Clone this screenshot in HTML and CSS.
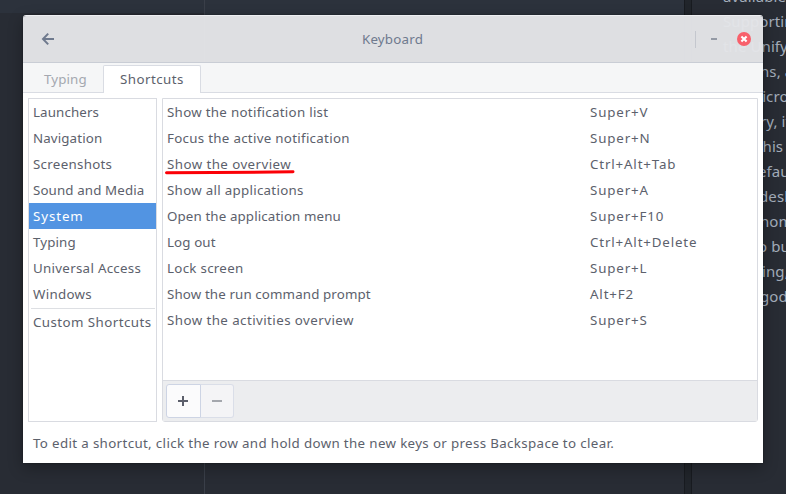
FILE: index.html
```
<!DOCTYPE html>
<html lang="en">
<head>
<meta charset="utf-8">
<title>Keyboard</title>
<link rel="stylesheet" href="styles.css">
</head>
<body>
<div class="desktop">
  <div class="pane pane-tree"></div>
  <div class="pane pane-editor"></div>
  <div class="gutter"></div>
  <div class="pane article">
    <p>available</p>
    <p>Supporting</p>
    <p>the Unify</p>
    <p class="in-ns">ns, a</p>
    <p class="in-micro">micro</p>
    <p class="in-ry">ry, it</p>
    <p class="in-this">this</p>
    <p class="in-efault">efault</p>
    <p class="in-desk">desk</p>
    <p class="in-nom">nom</p>
    <p class="in-bu">o bu</p>
    <p class="in-ing">ing,</p>
    <p class="in-god">god</p>
  </div>
</div>

<main class="window">
  <header class="titlebar">
    <svg class="back" width="14" height="14" viewBox="0 0 14 14"><path d="M7.2 1.6 2 7l5.2 5.4M2 7h11" fill="none" stroke="currentColor" stroke-width="2"/></svg>
    <h1>Keyboard</h1>
    <div class="controls">
      <span class="divider"></span>
      <span class="minimize"></span>
      <svg class="close" width="14" height="14" viewBox="0 0 14 14"><circle cx="7" cy="7" r="7" fill="#f8606b"/><path d="m4.4 4.4 5.2 5.2m0-5.2L4.4 9.6" stroke="#fff" stroke-width="2.1"/></svg>
    </div>
  </header>
  <nav class="tabs">
    <span class="tab">Typing</span>
    <span class="tab active">Shortcuts</span>
  </nav>
  <div class="content">
    <ul class="categories">
      <li>Launchers</li>
      <li>Navigation</li>
      <li class="spaced">Screenshots</li>
      <li>Sound and Media</li>
      <li class="selected wide">System</li>
      <li>Typing</li>
      <li class="spaced">Universal Access</li>
      <li class="spaced">Windows</li>
      <li class="separator"></li>
      <li class="loose">Custom Shortcuts</li>
    </ul>
    <section class="shortcuts">
      <div class="rows">
        <div class="row"><span class="spaced">Show the notification list</span><span>Super+V</span></div>
        <div class="row"><span class="spaced">Focus the active notification</span><span>Super+N</span></div>
        <div class="row"><span class="marked loose">Show the overview<svg class="underline" width="132" height="8" viewBox="0 0 132 8"><path d="M2.5 4.8 50 4.5 129 3.8" fill="none" stroke="#fb0007" stroke-width="3" stroke-linecap="round"/></svg></span><span>Ctrl+Alt+Tab</span></div>
        <div class="row"><span class="spaced">Show all applications</span><span>Super+A</span></div>
        <div class="row"><span>Open the application menu</span><span>Super+F10</span></div>
        <div class="row"><span>Log out</span><span>Ctrl+Alt+Delete</span></div>
        <div class="row"><span class="spaced">Lock screen</span><span>Super+L</span></div>
        <div class="row"><span>Show the run command prompt</span><span>Alt+F2</span></div>
        <div class="row"><span class="loose">Show the activities overview</span><span>Super+S</span></div>
      </div>
      <div class="toolbar">
        <span class="button add"><svg width="10" height="10" viewBox="0 0 10 10"><path d="M0 5h10M5 0v10" stroke="currentColor" stroke-width="2"/></svg></span>
        <span class="button remove"><svg width="10" height="10" viewBox="0 0 10 10"><path d="M0 5h10" stroke="currentColor" stroke-width="2"/></svg></span>
      </div>
    </section>
  </div>
  <footer class="hint">To edit a shortcut, click the row and hold down the new keys or press Backspace to clear.</footer>
</main>
</body>
</html>
```
FILE: styles.css
```
* { box-sizing: border-box; }

body {
  margin: 0;
  width: 786px;
  height: 494px;
  overflow: hidden;
  position: relative;
  background: #282c34;
  color: #5c616c;
  font: 13.33px/26px "Noto Sans", "Open Sans", sans-serif;
  letter-spacing: 0.12px;
}

.desktop {
  display: flex;
  height: 494px;
}

.pane { flex: none; }

.pane-tree {
  width: 205px;
  border-right: 1px solid #3a3f49;
  background: linear-gradient(#2c323c 13px, #282c34 13px);
}

.pane-editor {
  width: 479px;
  background: linear-gradient(#2c323c 15px, #282c34 15px);
}

.gutter {
  flex: none;
  width: 8px;
  border: solid #181b20;
  border-width: 0 1px;
  background: #21252b;
}

.article {
  width: 94px;
  padding-left: 31px;
  overflow: hidden;
  color: #a3acba;
  font-size: 15px;
  line-height: 25px;
  letter-spacing: 0.1px;
  white-space: nowrap;
}

.article p { margin: 0; }
.article p:first-child { margin-top: -16px; }
.article .in-ns { padding-left: 37px; }
.article .in-micro { padding-left: 25px; }
.article .in-ry { padding-left: 37px; }
.article .in-this { padding-left: 34px; }
.article .in-efault { padding-left: 35px; }
.article .in-desk { padding-left: 36px; }
.article .in-nom { padding-left: 37px; }
.article .in-bu { padding-left: 35px; }
.article .in-ing { padding-left: 39px; }
.article .in-god { padding-left: 37px; }

.window {
  position: absolute;
  left: 23px;
  top: 15px;
  width: 740px;
  height: 448px;
  display: flex;
  flex-direction: column;
  border-radius: 3px 3px 0 0;
  box-shadow: 0 0 2px rgba(0, 0, 0, 0.4), 0 5px 15px rgba(0, 0, 0, 0.3);
}

.titlebar {
  flex: none;
  height: 48px;
  display: grid;
  grid-template-columns: 1fr auto 1fr;
  align-items: center;
  padding: 0 12px 0 18px;
  border-top: 1px solid #eeeff2;
  border-bottom: 1px solid #c9cdd5;
  border-radius: 3px 3px 0 0;
  background: rgba(228, 229, 232, 0.97);
  background-clip: padding-box;
  color: #6f7a8e;
}

.titlebar h1 {
  margin: 0 0 0 -7px;
  font-size: inherit;
  font-weight: 400;
  letter-spacing: 0.2px;
}

.back { display: block; }

.controls {
  display: flex;
  align-items: center;
  justify-content: flex-end;
}

.divider { width: 1px; height: 17px; background: #c4c7ce; }
.minimize { width: 6px; height: 2px; margin: 0 20px 0 15px; background: #949aa5; }
.close { display: block; }

.tabs {
  flex: none;
  height: 30px;
  display: flex;
  align-items: flex-end;
  padding-left: 4px;
  border-bottom: 1px solid #d9dce3;
  background: #f5f6f7;
}

.tab {
  height: 28px;
  width: 76px;
  padding-left: 17px;
  line-height: 31px;
  color: #a4a8b0;
}

.tab.active {
  width: 98px;
  line-height: 27px;
  letter-spacing: 0.45px;
  margin-bottom: -1px;
  padding-left: 16px;
  border: 1px solid #d9dce3;
  border-bottom: 0;
  border-radius: 2px 2px 0 0;
  background: #fff;
  color: #5c616c;
}

.content {
  flex: none;
  height: 329px;
  display: flex;
  gap: 5px;
  padding: 5px 5px 0;
  background: #fff;
}

.categories {
  width: 129px;
  margin: 0;
  padding: 0;
  list-style: none;
  border: 1px solid #d9dbe1;
  white-space: nowrap;
}

.categories li { height: 26px; padding-left: 4px; }
.categories .selected { background: #5294e2; color: #fff; }
.categories .separator {
  height: 1px;
  margin: 1px 1px 0 2px;
  padding: 0;
  background: #dddfe3;
}

.spaced { letter-spacing: 0.29px; }
.loose { letter-spacing: 0.43px; }
.wide { letter-spacing: 0.9px; }

.shortcuts {
  flex: 1;
  display: flex;
  flex-direction: column;
  border: 1px solid #d9dbe1;
  border-radius: 0 0 3px 3px;
}

.rows { flex: 1; }

.row {
  display: grid;
  grid-template-columns: 423px 1fr;
  height: 26px;
  padding-left: 4px;
}

.row > :last-child { letter-spacing: 0.84px; }

.marked { position: relative; }

.underline {
  position: absolute;
  left: -3px;
  top: 17px;
}

.toolbar {
  display: flex;
  height: 41px;
  padding: 3px;
  border-top: 1px solid #d9dbe1;
  background: #ecedef;
}

.button {
  display: flex;
  align-items: center;
  justify-content: center;
  width: 34px;
  height: 34px;
  border: 1px solid #cdd4e4;
}

.button svg { display: block; }
.add { width: 35px; padding-right: 1px; border-radius: 3px 0 0 3px; background: #fbfbfc; color: #5c5f6b; }
.remove { width: 33px; border-color: #dadee8; border-left: 0; border-radius: 0 3px 3px 0; background: #f4f4f6; color: #a4a7ad; }

.hint {
  flex: 1;
  padding: 8px 10px 0;
  background: #fff;
  white-space: nowrap;
  letter-spacing: 0.35px;
}
```
